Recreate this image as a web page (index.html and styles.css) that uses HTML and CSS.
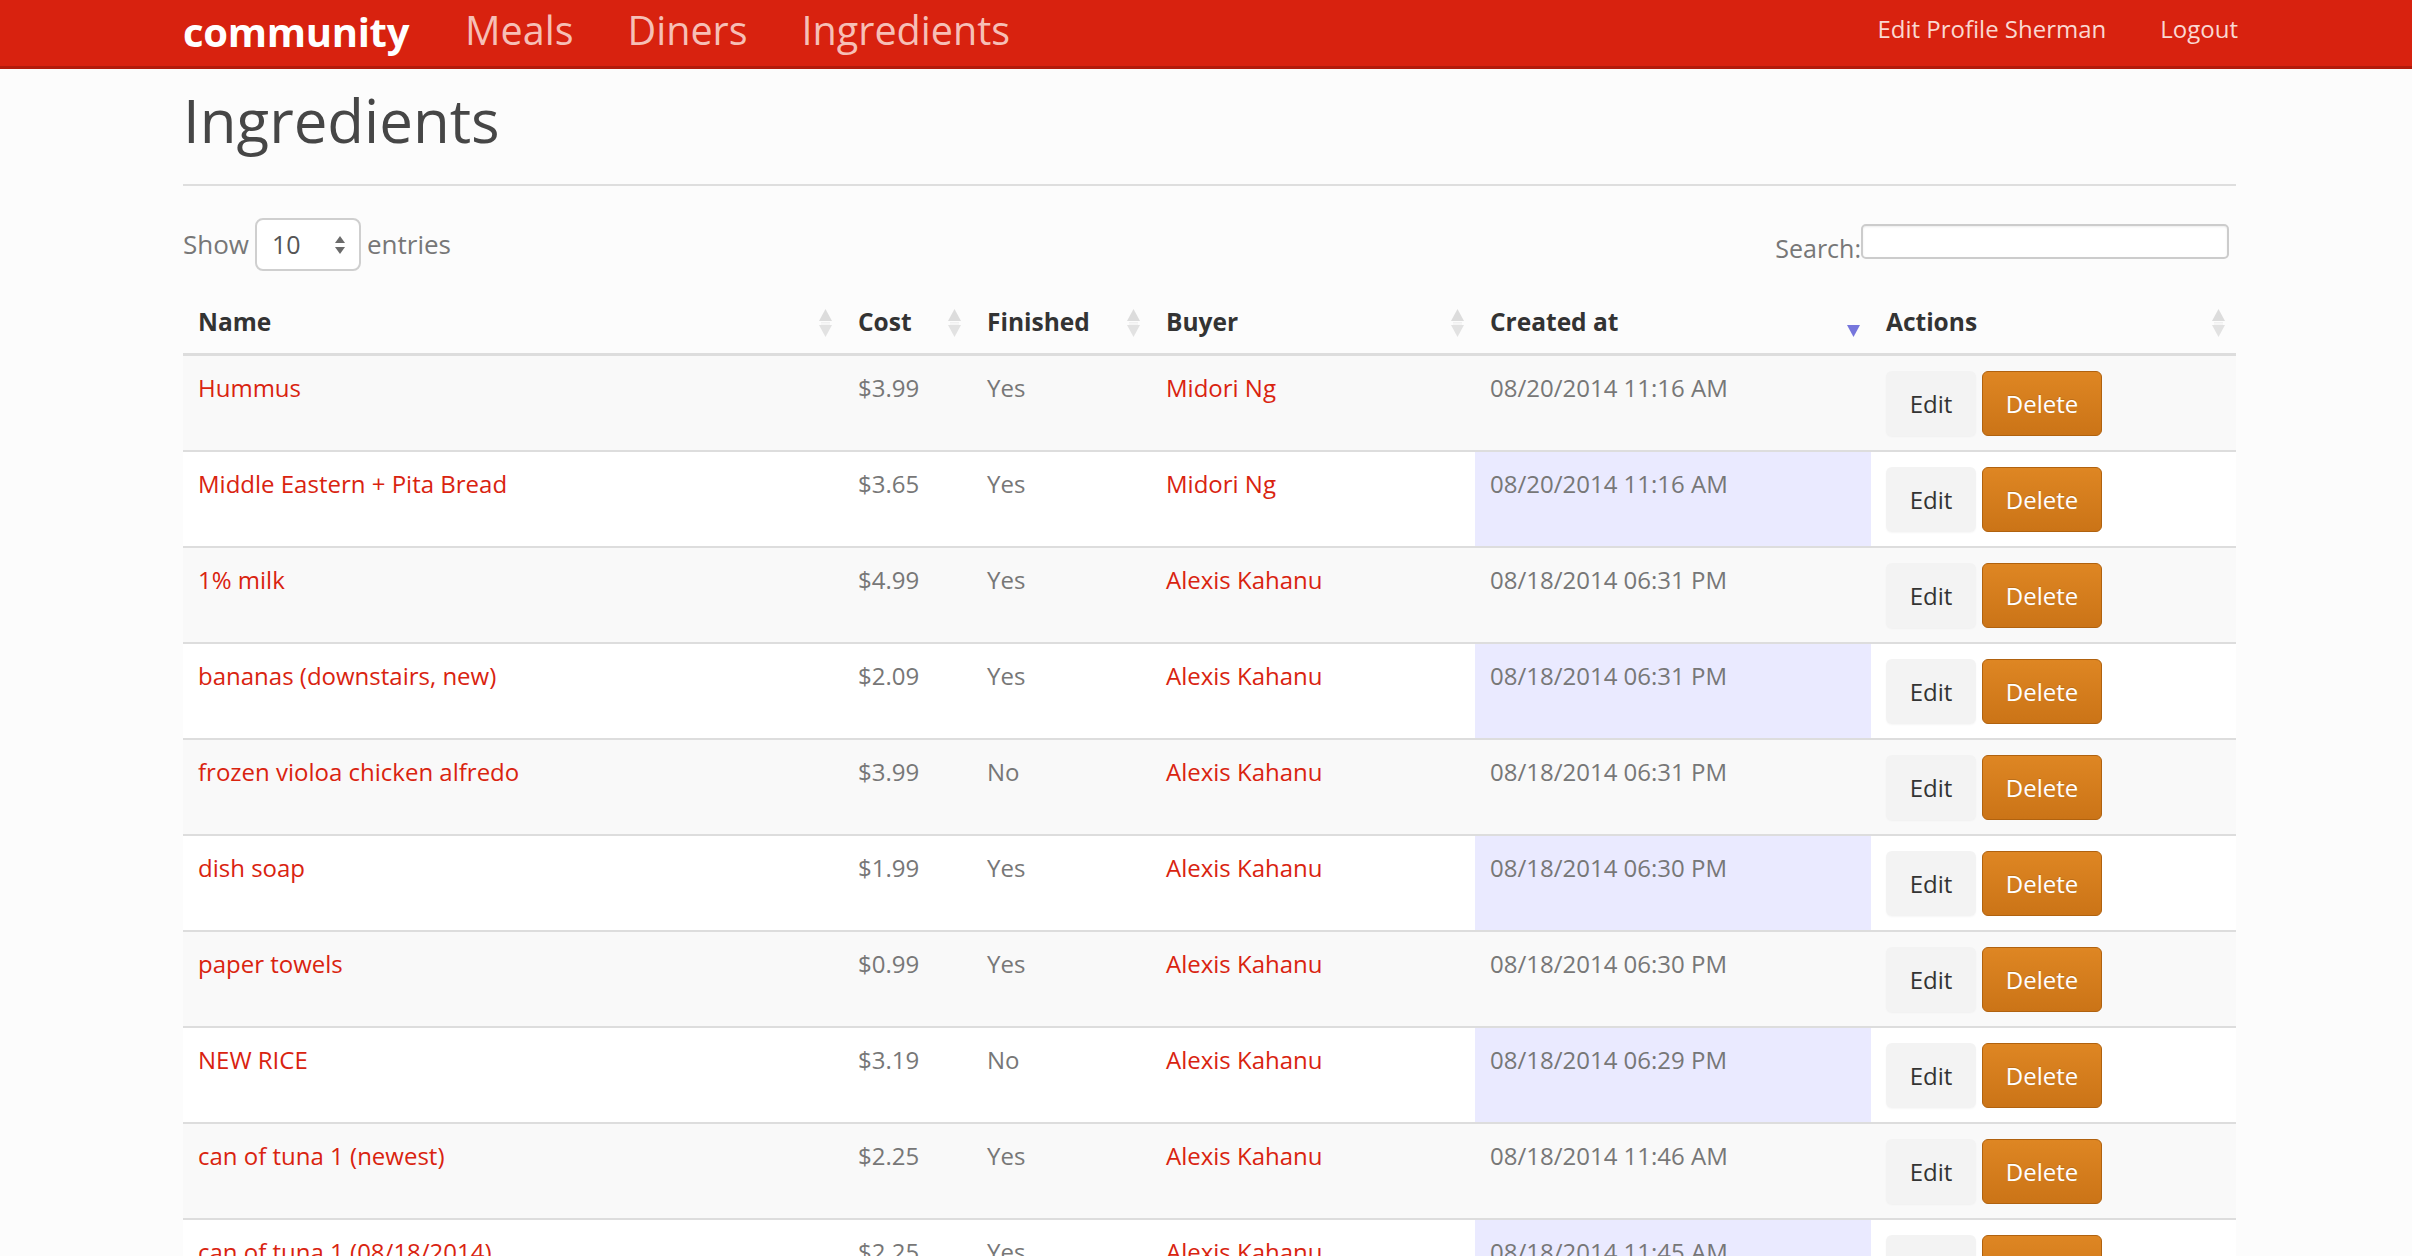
FILE: index.html
```html
<!DOCTYPE html>
<html>
<head>
<meta charset="utf-8">
<title>Ingredients</title>
<link rel="stylesheet" href="styles.css">
</head>
<body>
<nav class="navbar">
  <div class="container nav-inner">
    <a class="brand">community</a>
    <ul class="nav-main">
      <li><a>Meals</a></li>
      <li><a>Diners</a></li>
      <li><a>Ingredients</a></li>
    </ul>
    <ul class="nav-right">
      <li><a>Edit Profile Sherman</a></li>
      <li><a>Logout</a></li>
    </ul>
  </div>
</nav>

<main class="container">
  <h1 class="page-title">Ingredients</h1>

  <div class="controls">
    <div class="length">
      <span>Show</span>
      <div class="fake-select">
        <span class="sel-val">10</span>
        <svg class="sel-arrows" width="10" height="18" viewBox="0 0 10 18"><path d="M5 0 L10 7 L0 7 Z" fill="#6b6b6b"/><path d="M0 11 L10 11 L5 18 Z" fill="#6b6b6b"/></svg>
      </div>
      <span>entries</span>
    </div>
    <div class="search">
      <label class="search-label">Search:</label>
      <div class="search-input"></div>
    </div>
  </div>

  <table class="data">
    <colgroup>
      <col class="c-name"><col class="c-cost"><col class="c-fin"><col class="c-buyer"><col class="c-date"><col class="c-act">
    </colgroup>
    <thead>
      <tr>
        <th><div class="th-in"><span>Name</span><svg class="sort" width="13" height="28" viewBox="0 0 13 28"><path d="M6.5 0 L13 12 L0 12 Z" fill="#dcdcdc"/><path d="M2 13.5 H11 M2 15 H11" stroke="#ececec" stroke-width="0.8"/><path d="M0 16 L13 16 L6.5 28 Z" fill="#e2e2e2"/></svg></div></th>
        <th><div class="th-in"><span>Cost</span><svg class="sort" width="13" height="28" viewBox="0 0 13 28"><path d="M6.5 0 L13 12 L0 12 Z" fill="#dcdcdc"/><path d="M2 13.5 H11 M2 15 H11" stroke="#ececec" stroke-width="0.8"/><path d="M0 16 L13 16 L6.5 28 Z" fill="#e2e2e2"/></svg></div></th>
        <th><div class="th-in"><span>Finished</span><svg class="sort" width="13" height="28" viewBox="0 0 13 28"><path d="M6.5 0 L13 12 L0 12 Z" fill="#dcdcdc"/><path d="M2 13.5 H11 M2 15 H11" stroke="#ececec" stroke-width="0.8"/><path d="M0 16 L13 16 L6.5 28 Z" fill="#e2e2e2"/></svg></div></th>
        <th><div class="th-in"><span>Buyer</span><svg class="sort" width="13" height="28" viewBox="0 0 13 28"><path d="M6.5 0 L13 12 L0 12 Z" fill="#dcdcdc"/><path d="M2 13.5 H11 M2 15 H11" stroke="#ececec" stroke-width="0.8"/><path d="M0 16 L13 16 L6.5 28 Z" fill="#e2e2e2"/></svg></div></th>
        <th><div class="th-in"><span>Created at</span><svg class="sort" width="13" height="28" viewBox="0 0 13 28"><path d="M0 16 L13 16 L6.5 28 Z" fill="#7676dc"/></svg></div></th>
        <th><div class="th-in"><span>Actions</span><svg class="sort" width="13" height="28" viewBox="0 0 13 28"><path d="M6.5 0 L13 12 L0 12 Z" fill="#dcdcdc"/><path d="M2 13.5 H11 M2 15 H11" stroke="#ececec" stroke-width="0.8"/><path d="M0 16 L13 16 L6.5 28 Z" fill="#e2e2e2"/></svg></div></th>
      </tr>
    </thead>
    <tbody>
      <tr class="odd"><td><a class="link">Hummus</a></td><td>$3.99</td><td>Yes</td><td><a class="link">Midori Ng</a></td><td class="sorted">08/20/2014 11:16 AM</td><td><div class="acts"><a class="btn btn-edit">Edit</a><a class="btn btn-del">Delete</a></div></td></tr>
      <tr class="even"><td><a class="link">Middle Eastern + Pita Bread</a></td><td>$3.65</td><td>Yes</td><td><a class="link">Midori Ng</a></td><td class="sorted">08/20/2014 11:16 AM</td><td><div class="acts"><a class="btn btn-edit">Edit</a><a class="btn btn-del">Delete</a></div></td></tr>
      <tr class="odd"><td><a class="link">1% milk</a></td><td>$4.99</td><td>Yes</td><td><a class="link">Alexis Kahanu</a></td><td class="sorted">08/18/2014 06:31 PM</td><td><div class="acts"><a class="btn btn-edit">Edit</a><a class="btn btn-del">Delete</a></div></td></tr>
      <tr class="even"><td><a class="link">bananas (downstairs, new)</a></td><td>$2.09</td><td>Yes</td><td><a class="link">Alexis Kahanu</a></td><td class="sorted">08/18/2014 06:31 PM</td><td><div class="acts"><a class="btn btn-edit">Edit</a><a class="btn btn-del">Delete</a></div></td></tr>
      <tr class="odd"><td><a class="link">frozen violoa chicken alfredo</a></td><td>$3.99</td><td>No</td><td><a class="link">Alexis Kahanu</a></td><td class="sorted">08/18/2014 06:31 PM</td><td><div class="acts"><a class="btn btn-edit">Edit</a><a class="btn btn-del">Delete</a></div></td></tr>
      <tr class="even"><td><a class="link">dish soap</a></td><td>$1.99</td><td>Yes</td><td><a class="link">Alexis Kahanu</a></td><td class="sorted">08/18/2014 06:30 PM</td><td><div class="acts"><a class="btn btn-edit">Edit</a><a class="btn btn-del">Delete</a></div></td></tr>
      <tr class="odd"><td><a class="link">paper towels</a></td><td>$0.99</td><td>Yes</td><td><a class="link">Alexis Kahanu</a></td><td class="sorted">08/18/2014 06:30 PM</td><td><div class="acts"><a class="btn btn-edit">Edit</a><a class="btn btn-del">Delete</a></div></td></tr>
      <tr class="even"><td><a class="link">NEW RICE</a></td><td>$3.19</td><td>No</td><td><a class="link">Alexis Kahanu</a></td><td class="sorted">08/18/2014 06:29 PM</td><td><div class="acts"><a class="btn btn-edit">Edit</a><a class="btn btn-del">Delete</a></div></td></tr>
      <tr class="odd"><td><a class="link">can of tuna 1 (newest)</a></td><td>$2.25</td><td>Yes</td><td><a class="link">Alexis Kahanu</a></td><td class="sorted">08/18/2014 11:46 AM</td><td><div class="acts"><a class="btn btn-edit">Edit</a><a class="btn btn-del">Delete</a></div></td></tr>
      <tr class="even"><td><a class="link">can of tuna 1 (08/18/2014)</a></td><td>$2.25</td><td>Yes</td><td><a class="link">Alexis Kahanu</a></td><td class="sorted">08/18/2014 11:45 AM</td><td><div class="acts"><a class="btn btn-edit">Edit</a><a class="btn btn-del">Delete</a></div></td></tr>
    </tbody>
  </table>
</main>
</body>
</html>
```

FILE: styles.css
```css
html, body {
  margin: 0;
  padding: 0;
}
body {
  background: #fcfcfc;
  font-family: "Open Sans", "Liberation Sans", sans-serif;
  font-size: 24px;
  line-height: 35px;
  color: #777;
}
.container {
  width: 2053px;
  margin-left: 183px;
}
a { text-decoration: none; cursor: pointer; }

/* navbar */
.navbar {
  background: #d8220f;
  height: 66px;
  border-bottom: 3px solid #b21b0b;
}
.nav-inner {
  display: flex;
  align-items: flex-start;
  height: 66px;
}
.brand {
  color: #fff;
  font-weight: 700;
  font-size: 40px;
  line-height: 63px;
  letter-spacing: -0.3px;
}
.nav-main, .nav-right {
  list-style: none;
  margin: 0;
  padding: 0;
  display: flex;
}
.nav-main {
  margin-left: 29px;
}
.nav-main a {
  display: block;
  padding: 0 27px;
  font-size: 39.5px;
  line-height: 61px;
  color: #f6bfb6;
}
.nav-right {
  margin-left: auto;
  margin-right: -2px;
  gap: 54px;
}
.nav-right a {
  display: block;
  font-size: 24px;
  line-height: 57px;
  color: #fad8d1;
}

/* title */
.page-title {
  margin: 18px 0 0;
  padding-bottom: 31px;
  border-bottom: 2px solid #dedede;
  font-size: 60px;
  line-height: 66px;
  font-weight: 400;
  color: #464646;
}

/* controls */
.controls {
  margin-top: 32px;
  display: flex;
  justify-content: space-between;
  align-items: flex-start;
  font-size: 26px;
}
.length {
  display: flex;
  align-items: center;
  gap: 6px;
  height: 53px;
}
.fake-select {
  border: 2px solid #cfcfcf;
  border-radius: 8px;
  background: #fff;
  display: flex;
  align-items: center;
  justify-content: space-between;
  padding: 0 14px 0 15px;
  box-sizing: border-box;
  width: 106px;
  height: 53px;
  color: #555;
  font-size: 25px;
}
.sel-arrows { display: block; }
.search {
  display: flex;
  align-items: flex-end;
  margin-top: 6px;
  margin-right: 7px;
  font-size: 25px;
}
.search-label {
  line-height: 21px;
}
.search-input {
  width: 368px;
  height: 35px;
  box-sizing: border-box;
  border: 2px solid #cccccc;
  border-radius: 5px;
  background: #fff;
  box-shadow: inset 0 1px 2px rgba(0,0,0,0.08);
}

/* table */
.data {
  margin-top: 19px;
  width: 2053px;
  border-collapse: collapse;
  table-layout: fixed;
}
.c-name { width: 660px; }
.c-cost { width: 129px; }
.c-fin { width: 179px; }
.c-buyer { width: 324px; }
.c-date { width: 396px; }
.c-act { width: 365px; }
.data th {
  text-align: left;
  padding: 14px 11px 14px 15px;
  color: #333;
  font-weight: 700;
  font-size: 24.5px;
  border-bottom: 3px solid #dddddd;
  vertical-align: top;
}
.th-in {
  display: flex;
  justify-content: space-between;
  align-items: center;
}
.sort { display: block; margin-top: 3px; }
.data td {
  padding: 14px 15px 14px 15px;
  vertical-align: top;
  border-top: 2px solid #dddddd;
  height: 66px;
}
.data tbody tr:first-child td { border-top: 0; }
.data tr.odd td { background: #f9f9f9; }
.data tr.even td { background: #ffffff; }
.data tr.even td.sorted { background: #eaeaff; }
.link { color: #d9230f; }

.acts {
  display: flex;
  gap: 6px;
  margin-top: 1px;
}
.btn {
  display: block;
  height: 65px;
  box-sizing: border-box;
  line-height: 35px;
  padding: 15px 0;
  text-align: center;
  border-radius: 6px;
  font-size: 24px;
}
.btn-edit {
  width: 90px;
  background: #f3f3f3;
  color: #333;
  box-shadow: 0 1px 2px rgba(0,0,0,0.04);
}
.btn-del {
  width: 120px;
  padding: 14px 0;
  background: linear-gradient(#de8623, #cb7417);
  border: 1px solid #b0620f;
  color: #fff;
  text-shadow: 0 -1px 0 rgba(0,0,0,0.15);
}
```
